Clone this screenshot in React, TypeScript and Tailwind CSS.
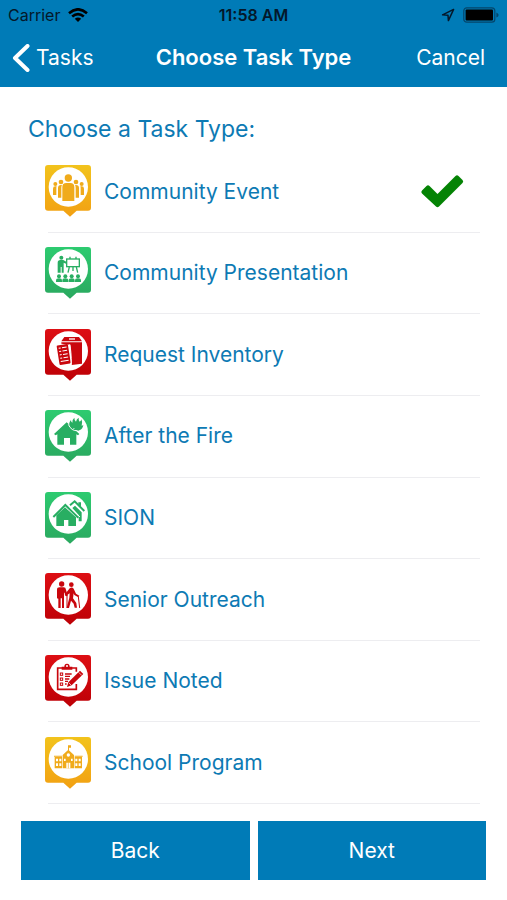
import { useState, type ReactNode } from "react";

type PinColor = "yellow" | "green" | "red";

const PIN_COLORS: Record<PinColor, { from: string; to: string; glyph: string }> = {
  yellow: { from: "#f2c31c", to: "#f2a012", glyph: "#f0ab1b" },
  green: { from: "#2dcb70", to: "#2aa85f", glyph: "#28ae62" },
  red: { from: "#dd0f14", to: "#bd0006", glyph: "#c9060d" },
};

function PeopleGlyph() {
  return (
    <>
      <circle cx="97" cy="61" r="11" />
      <circle cx="75" cy="73" r="7" />
      <circle cx="120" cy="73" r="7" />
      <circle cx="58" cy="79" r="6" />
      <circle cx="137" cy="79" r="6" />
      <path d="M79 130V88q0-12 12-12h12q12 0 12 12v42z" />
      <path d="M66 120V91q0-9 9-9 2 0 3 1-2 3-2 7v30z" />
      <path d="M129 120V91q0-9-9-9-2 0-3 1 2 3 2 7v30z" />
      <path d="M51 112V93q0-7 7-7h4q-1 2-1 5v21z" />
      <path d="M144 112V93q0-7-7-7h-4q1 2 1 5v21z" />
    </>
  );
}

function PresentationGlyph() {
  return (
    <>
      <circle cx="76" cy="54" r="6" />
      <path d="M65 99V69q0-8 8-8h9l10 6-2 5-7-3v30h-6V82h-3v17z" />
      <g fill="none" stroke="currentColor" strokeWidth="4">
        <rect x="92" y="58" width="38" height="23" />
        <path d="M102 58v-7M120 58v-7M100 82l-4 17M121 82l4 17M111 82v12" />
      </g>
      {[69, 88, 107, 126].map((x) => (
        <g key={x}>
          <circle cx={x} cy="110" r="6" />
          <path d={`M${x - 9} 127v-4q0-7 9-7t9 7v4z`} />
        </g>
      ))}
    </>
  );
}

function InventoryGlyph() {
  return (
    <>
      <path d="M85 46h44l9 13H76z" />
      <path d="M76 62h62v64l-31 4-4-61-27-3z" />
      <path d="M99 50h18v4H99z" fill="#fff" />
      <g transform="rotate(-9 82 98)">
        <rect x="66" y="69" width="34" height="59" rx="3" />
        <path
          d="M71 78h6M81 78h14M71 88h6M81 88h14M71 98h6M81 98h14M71 108h6M81 108h14M71 118h24"
          fill="none"
          stroke="#fff"
          strokeWidth="3"
        />
      </g>
      <path d="M101 68q5 20 5 61" fill="none" stroke="#fff" strokeWidth="3" />
    </>
  );
}

function FireHouseGlyph() {
  return (
    <>
      <path d="M92 59l38 35-4 4-5-3v31h-19v-20H84v20H64V95l-5 3-5-4z" />
      <path d="M101 69q-4-8 4-17 0 7 4 8-1-9 6-15 0 9 5 12 1-8 8-12-1 7 3 12 4-1 5-7 5 10 1 19 3 0 5-3-1 12-12 17-15 7-25-5 8 3 12-1-10 0-16-8z" />
      <path d="M97 65q9 21 28 19" fill="none" stroke="#fff" strokeWidth="3" />
    </>
  );
}

function HousesGlyph() {
  return (
    <>
      <path d="M87 68l33 30v26H97v-18H84v18H61V92z" />
      <g fill="none" stroke="currentColor" strokeWidth="6">
        <path d="M52 97l36-36 39 38" />
        <path d="M102 62l14-12 29 29" />
      </g>
      <path d="M127 53h8v13l-8-8zM109 70l8-7 20 20v27h-9V91z" />
      <path d="M100 66l32 31" fill="none" stroke="#fff" strokeWidth="3" />
    </>
  );
}

function WalkersGlyph() {
  return (
    <>
      <circle cx="77" cy="55" r="8" />
      <path d="M63 98V72q0-7 8-7h12q6 0 7 7l5 18-4 2-7-12v47h-6v-29h-4v29h-7V99z" />
      <circle cx="106" cy="57" r="7" />
      <path d="M101 68q7-5 12 1l7 15 10 6-3 5-12-7-2-5-2 15 10 14 2 14h-7l-3-12-8-9-6 22h-7l8-31 1-13-12 8-3-4z" />
      <path d="M93 86v41M127 93l4 34" fill="none" stroke="currentColor" strokeWidth="3" />
    </>
  );
}

function ClipboardGlyph() {
  return (
    <>
      <g fill="none" stroke="currentColor" strokeWidth="5">
        <path d="M121 72V61H65v64h56v-16" />
        <rect x="73" y="76" width="7" height="7" strokeWidth="3" />
        <rect x="73" y="91" width="7" height="7" strokeWidth="3" />
        <rect x="73" y="106" width="7" height="7" strokeWidth="3" />
        <path d="M87 79h20M87 86h15M87 94h13M87 101h9M87 109h5" strokeWidth="4" />
      </g>
      <path d="M77 66v-9h8q0-9 8-9t8 9h8v9z" />
      <circle cx="93" cy="55" r="3" fill="#fff" />
      <path
        d="M97 104l35-35 10 10-35 34-14 5z"
        stroke="#fff"
        strokeWidth="3"
        paintOrder="stroke"
      />
      <path d="M128 74l9 9M98 105l8 8" fill="none" stroke="#fff" strokeWidth="2" />
    </>
  );
}

function SchoolGlyph() {
  return (
    <>
      <path d="M96 47h9v7h-6v9h-3zM97 60l17 16v40H80V76zM56 82h22v34H56zM116 82h22v34h-22zM54 78h24v3H54zM116 78h24v3h-24z" />
      <g fill="#fff">
        <circle cx="97" cy="76" r="5" />
        <path d="M60 87h6v8h-6zM70 87h6v8h-6zM118 87h6v8h-6zM128 87h6v8h-6zM60 101h6v8h-6zM70 101h6v8h-6zM118 101h6v8h-6zM128 101h6v8h-6zM84 87h5v7h-5zM105 87h5v7h-5zM91 99h12v17H91z" />
      </g>
      <path d="M97 98v18" stroke="currentColor" strokeWidth="2" />
    </>
  );
}

const TASK_TYPES: { name: string; color: PinColor; glyph: ReactNode }[] = [
  { name: "Community Event", color: "yellow", glyph: <PeopleGlyph /> },
  { name: "Community Presentation", color: "green", glyph: <PresentationGlyph /> },
  { name: "Request Inventory", color: "red", glyph: <InventoryGlyph /> },
  { name: "After the Fire", color: "green", glyph: <FireHouseGlyph /> },
  { name: "SION", color: "green", glyph: <HousesGlyph /> },
  { name: "Senior Outreach", color: "red", glyph: <WalkersGlyph /> },
  { name: "Issue Noted", color: "red", glyph: <ClipboardGlyph /> },
  { name: "School Program", color: "yellow", glyph: <SchoolGlyph /> },
];

function Pin({ color, children }: { color: PinColor; children: ReactNode }) {
  const { from, to, glyph } = PIN_COLORS[color];
  const id = `pin-${color}`;

  return (
    <svg viewBox="27 22 138 156" className="h-13 w-[46px] shrink-0" aria-hidden="true">
      <defs>
        <linearGradient id={id} x1="0" y1="0" x2="0" y2="1">
          <stop offset="0" stopColor={from} />
          <stop offset="1" stopColor={to} />
        </linearGradient>
      </defs>
      <path
        d="M36 22h120q9 0 9 9v119q0 9-9 9h-34l-20 18-20-18H36q-9 0-9-9V31q0-9 9-9z"
        fill={`url(#${id})`}
      />
      <circle cx="97" cy="88" r="59" fill="#fff" />
      <g fill={glyph} color={glyph}>
        {children}
      </g>
    </svg>
  );
}

function StatusBar() {
  return (
    <div className="grid h-7 grid-cols-3 items-center px-2 pt-0.5 text-base text-[#04182a]">
      <div className="flex items-center gap-2">
        <span>Carrier</span>
        <svg viewBox="0 0 20 14" className="h-3.5 w-5 text-black" aria-hidden="true">
          <g fill="none" stroke="currentColor" strokeWidth="2.6">
            <path d="M1 5.2Q10-2.6 19 5.2" />
            <path d="M4.2 8.6q5.800-5 11.6 0" />
          </g>
          <path d="M6.8 10.8q3.2-2.6 6.4 0L10 14z" fill="currentColor" />
        </svg>
      </div>
      <span className="text-center font-semibold">11:58 AM</span>
      <div className="flex items-center justify-end gap-2">
        <svg viewBox="0 0 14 14" className="size-3.5" aria-hidden="true">
          <path
            d="M12.6 1.4L1.6 6.8l5.4.4.4 5.4z"
            fill="none"
            stroke="currentColor"
            strokeWidth="1.5"
            strokeLinejoin="round"
          />
        </svg>
        <svg viewBox="0 0 36 16" className="h-4 w-9" aria-hidden="true">
          <rect x="0.8" y="0.8" width="31" height="14.4" rx="3" fill="none" stroke="#04466b" strokeWidth="1.2" />
          <rect x="2.6" y="2.6" width="27.4" height="10.8" rx="1" />
          <path d="M33.4 5.4q2.2 1 2.2 2.6t-2.2 2.6z" fill="#04466b" />
        </svg>
      </div>
    </div>
  );
}

export default function App() {
  const [selected, setSelected] = useState("Community Event");

  return (
    <div className="flex min-h-screen flex-col bg-white font-['Inter','Liberation_Sans',sans-serif] text-[#0d7ab4]">
      <header className="bg-[#007bb7] text-white">
        <StatusBar />
        <nav className="grid h-[59px] grid-cols-[1fr_auto_1fr] items-center px-3 text-[21px]">
          <button type="button" className="flex items-center gap-1.5 justify-self-start">
            <svg viewBox="0 0 18 28" className="h-7 w-[18px]" aria-hidden="true">
              <path
                d="M15.5 2L3 14l12.5 12"
                fill="none"
                stroke="currentColor"
                strokeWidth="4"
                strokeLinecap="round"
                strokeLinejoin="round"
              />
            </svg>
            Tasks
          </button>
          <h1 className="text-[22px] font-semibold">Choose Task Type</h1>
          <button type="button" className="justify-self-end pr-2.5">
            Cancel
          </button>
        </nav>
      </header>

      <main className="flex flex-1 flex-col">
        <h2 id="task-type-heading" className="px-7 pt-[26px] pb-1.5 text-[23px] leading-8">
          Choose a Task Type:
        </h2>

        <div
          role="radiogroup"
          aria-labelledby="task-type-heading"
          className="grid flex-1 auto-rows-fr pr-[27px] pl-[45px]"
        >
          {TASK_TYPES.map((type) => (
            <label
              key={type.name}
              className="relative flex cursor-pointer items-center gap-[13px] pb-px text-[21px] after:absolute after:right-0 after:bottom-0 after:left-[3px] after:h-px after:bg-[#ededf0]"
            >
              <input
                type="radio"
                name="task-type"
                value={type.name}
                checked={selected === type.name}
                onChange={() => setSelected(type.name)}
                className="sr-only"
              />
              <Pin color={type.color}>{type.glyph}</Pin>
              <span className="flex-1">{type.name}</span>
              {selected === type.name && (
                <svg viewBox="0 0 44 34" className="mr-4 h-[34px] w-11" aria-hidden="true">
                  <path
                    d="M2 16.5l4.5-4.5q1.5-1.5 3 0l8 8L35.5 2q1.5-1.5 3 0l4 4q1.5 1.5 0 3L19 32.5q-1.5 1.5-3 0L2 19.5q-1.5-1.5 0-3z"
                    fill="#048304"
                  />
                </svg>
              )}
            </label>
          ))}
        </div>
      </main>

      <footer className="grid grid-cols-2 gap-2 px-[21px] pt-[17px] pb-5 text-[21px] text-white">
        <button type="button" className="h-[59px] bg-[#007bb7]">
          Back
        </button>
        <button type="button" className="h-[59px] bg-[#007bb7]">
          Next
        </button>
      </footer>
    </div>
  );
}
